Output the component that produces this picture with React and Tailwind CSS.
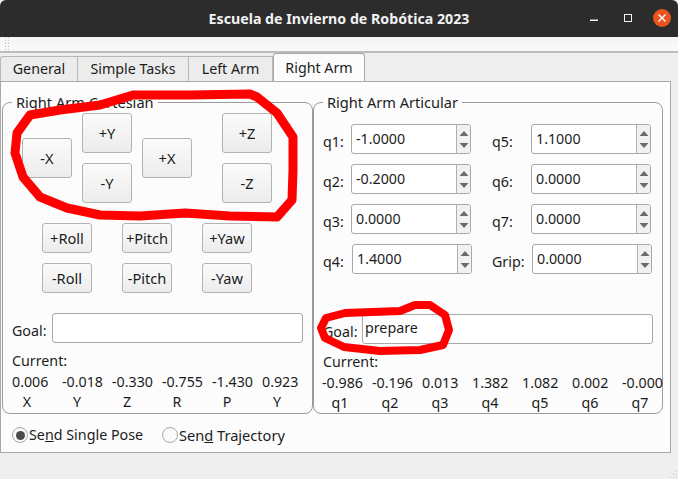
const FONT = "font-['Noto_Sans',sans-serif]";

function Btn({ children, tall }) {
  return (
    <button
      className={`w-[50px] ${tall ? "h-[40px]" : "h-[30px]"} shrink-0 rounded-[3px] border border-[#b2b2b2] bg-gradient-to-b from-[#fbfbfb] to-[#ececec] text-[14.6px] leading-none text-[#1c1c1c]`}
    >
      {children}
    </button>
  );
}

function Spin({ value, w = "w-[120px]" }) {
  return (
    <div className={`${w} flex h-[30px] shrink-0 overflow-hidden rounded-[3px] border border-[#a9a9a9] bg-white`}>
      <div className="flex-1 pl-[4px] text-[14.25px] leading-[28px] text-[#1c1c1c]">{value}</div>
      <div className="flex w-[14px] flex-col items-center justify-center gap-[3px] border-l border-[#b0b0b0] bg-[#f1f1f1]">
        <svg width="10" height="9" viewBox="0 0 10 9"><path d="M0.5 7 L5 2 L9.5 7 Z" fill="#6b6b6b" /></svg>
        <svg width="10" height="9" viewBox="0 0 10 9"><path d="M0.5 2 L5 7 L9.5 2 Z" fill="#6b6b6b" /></svg>
      </div>
    </div>
  );
}

function SpinRow({ a, av, b, bv, w1, w2, gap }) {
  return (
    <div className="flex h-[30px] items-center">
      <span className={`${w1} pt-[5px] text-[14.25px] leading-[20px]`}>{a}</span>
      <Spin value={av} />
      <span className={`${gap} ${w2} pt-[5px] text-[14.25px] leading-[20px]`}>{b}</span>
      <Spin value={bv} />
    </div>
  );
}

function Readout({ values, labels, labelW, shift }) {
  return (
    <>
      <div className="mt-[8px] h-[20px] text-[14.25px] leading-[20px]">Current:</div>
      <div className={`flex h-[21px] items-end text-[14.25px] leading-[20px] ${shift}`}>
        {values.map((v, i) => (
          <span key={i} className="w-[50px] shrink-0 whitespace-nowrap">{v}</span>
        ))}
      </div>
      <div className="flex h-[20px] text-[14.25px] leading-[20px]">
        {labels.map((v, i) => (
          <span key={i} className="w-[50px] shrink-0"><span className={`block text-center ${labelW}`}>{v}</span></span>
        ))}
      </div>
    </>
  );
}

function Group({ title, className, children }) {
  return (
    <div className={`relative h-[312px] shrink-0 rounded-[8px] border border-[#9c9c9c] ${className}`}>
      <span className="absolute left-[9px] top-[-11px] bg-[#fcfcfc] px-[4px] text-[14.6px] leading-[20px] whitespace-nowrap">{title}</span>
      {children}
    </div>
  );
}

function Tab({ children, active, w }) {
  return active ? (
    <div className={`${w} relative z-10 flex h-[28px] items-center justify-center rounded-t-[3px] border border-b-0 border-[#a9a9a9] bg-[#fcfcfc] pt-[1px] text-[14.25px]`}>{children}</div>
  ) : (
    <div className={`${w} flex h-[25px] items-center justify-center border-t border-r border-[#b8b8b8] bg-[#ececec] text-[14.25px] first:rounded-tl-[3px] first:border-l`}>{children}</div>
  );
}

function Radio({ checked, children, w, size = "text-[14.3px]" }) {
  return (
    <div className={`${w} flex items-center`}>
      <span className="flex h-[16px] w-[16px] shrink-0 items-center justify-center rounded-full border border-[#a9a9a9] bg-[#fafafa]">
        {checked && <span className="h-[9px] w-[9px] rounded-full bg-[#4b4b4b]" />}
      </span>
      <span className={`ml-[1px] whitespace-nowrap leading-[20px] ${size}`}>{children}</span>
    </div>
  );
}

export default function App() {
  return (
    <div className={`${FONT} relative flex h-[479px] w-[678px] flex-col overflow-hidden bg-[#efefef] text-[#1c1c1c]`}>
      <div className="relative flex h-[37px] shrink-0 items-center justify-center rounded-t-[6px] bg-[#2c2c2c]">
        <span className="text-[14.2px] font-bold text-[#f2f2f2]">Escuela de Invierno de Robótica 2023</span>
        <div className="absolute right-[7px] top-[9px] flex items-center">
          <svg width="8" height="18" viewBox="0 0 8 18" className="mr-[26px]"><rect x="0" y="10.5" width="8" height="1.5" fill="#f2f2f2" /></svg>
          <span className="mr-[21px] box-content h-[6px] w-[6px] border-[1.5px] border-[#f2f2f2]" />
          <svg width="18" height="18" viewBox="0 0 18 18">
            <circle cx="9" cy="9" r="9" fill="#e95420" />
            <path d="M5.5 5.5 L12.5 12.5 M12.5 5.5 L5.5 12.5" stroke="#fff" strokeWidth="1.4" />
          </svg>
        </div>
      </div>

      <div className="flex h-[16px] shrink-0 items-center border-b-[2px] border-[#bcbcbc] bg-gradient-to-b from-[#f4f4f4] to-[#fafafa] pl-[5px]">
        <svg width="4" height="14" viewBox="0 0 4 14">
          {[1, 4, 7, 10, 13].map((y) => (
            <g key={y}>
              <rect x="0" y={y - 1} width="1" height="1" fill="#bdbdbd" />
              <rect x="3" y={y - 1} width="1" height="1" fill="#bdbdbd" />
            </g>
          ))}
        </svg>
      </div>

      <div className="flex h-[28px] shrink-0 items-end">
        <Tab w="w-[78px]">General</Tab>
        <Tab w="w-[111px]">Simple Tasks</Tab>
        <Tab w="w-[84px]">Left Arm</Tab>
        <Tab w="w-[92px]" active>Right Arm</Tab>
      </div>

      <div className="flex h-[372px] w-[671px] shrink-0 flex-col border border-[#a9a9a9] bg-[#fcfcfc] pl-[1px] pt-[20px]">
        <div className="flex">
          <Group title="Right Arm Cartesian" className="w-[311px] pl-[9px] pt-[10px]">
            <div className="ml-[10px] flex items-center gap-[10px]">
              <Btn tall>-X</Btn>
              <div className="flex flex-col gap-[10px]"><Btn tall>+Y</Btn><Btn tall>-Y</Btn></div>
              <Btn tall>+X</Btn>
              <div className="ml-[20px] flex flex-col gap-[10px]"><Btn tall>+Z</Btn><Btn tall>-Z</Btn></div>
            </div>
            <div className="ml-[30px] mt-[20px] flex gap-[30px]">
              <Btn>+Roll</Btn><Btn>+Pitch</Btn><Btn>+Yaw</Btn>
            </div>
            <div className="ml-[30px] mt-[10px] flex gap-[30px]">
              <Btn>-Roll</Btn><Btn>-Pitch</Btn><Btn>-Yaw</Btn>
            </div>
            <div className="mt-[20px] flex h-[30px] items-center">
              <span className="w-[40px] pt-[6px] text-[14.25px] leading-[20px]">Goal:</span>
              <div className="h-[30px] w-[251px] rounded-[3px] border border-[#a9a9a9] bg-white" />
            </div>
            <Readout labelW="w-[30px]" shift="" values={["0.006", "-0.018", "-0.330", "-0.755", "-1.430", "0.923"]} labels={["X", "Y", "Z", "R", "P", "Y"]} />
          </Group>

          <Group title="Right Arm Articular" className="w-[350px] pl-[9px] pt-[21px]">
            <div className="flex flex-col gap-[10px]">
              <SpinRow a="q1:" av="-1.0000" b="q5:" bv="1.1000" w1="w-[28px]" w2="w-[39px]" gap="ml-[21px]" />
              <SpinRow a="q2:" av="-0.2000" b="q6:" bv="0.0000" w1="w-[28px]" w2="w-[39px]" gap="ml-[21px]" />
              <SpinRow a="q3:" av="0.0000" b="q7:" bv="0.0000" w1="w-[28px]" w2="w-[39px]" gap="ml-[21px]" />
              <SpinRow a="q4:" av="1.4000" b="Grip:" bv="0.0000" w1="w-[29px]" w2="w-[40px]" gap="ml-[20px]" />
            </div>
            <div className="mt-[40px] flex h-[30px] items-center">
              <span className="w-[39px] pt-[6px] text-[14.25px] leading-[20px]">Goal:</span>
              <div className="h-[30px] w-[291px] rounded-[3px] border border-[#a9a9a9] bg-white pl-[2px] text-[14.25px] leading-[26px]">prepare</div>
            </div>
            <Readout labelW="w-[34px]" shift="-ml-[1px]" values={["-0.986", "-0.196", "0.013", "1.382", "1.082", "0.002", "-0.000"]} labels={["q1", "q2", "q3", "q4", "q5", "q6", "q7"]} />
          </Group>
        </div>
        <div className="mt-[11px] flex pl-[10px]">
          <Radio checked w="w-[150px]">Se<u>n</u>d Single Pose</Radio>
          <Radio size="text-[14.6px]">Sen<u>d</u> Trajectory</Radio>
        </div>
      </div>

      <svg width="10" height="12" viewBox="0 0 10 12" className="absolute bottom-0 right-0">
        {[[8, 2], [5, 5], [8, 5], [2, 8], [5, 8], [8, 8]].map(([x, y], i) => (
          <rect key={i} x={x} y={y + 2} width="1" height="1" fill="#c4c4c4" />
        ))}
      </svg>

      <svg width="678" height="479" viewBox="0 0 678 479" className="pointer-events-none absolute left-0 top-0" fill="none" stroke="#ff0000" strokeLinejoin="round" strokeLinecap="round">
        <path strokeWidth="9" d="M15 153 L17 133 L30 115 L60 110 L100 105 L133 95 L190 95 L250 94 L257 97 L277 113 L293 137 L293 170 L292 200 L277 217 L230 216 L185 213 L140 216 L100 215 L67 208 L40 197 L23 177 Z" />
        <path strokeWidth="8" d="M344 347 L325 338 L321 328 L326 318 L345 313 L400 311 L415 305 L430 305 L445 315 L449 330 L443 345 L420 350 L380 351 Z" />
      </svg>
    </div>
  );
}
